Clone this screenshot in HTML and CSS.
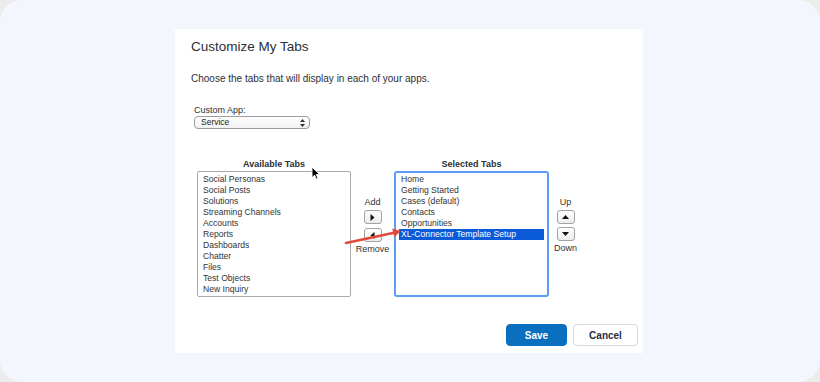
FILE: index.html
```html
<!DOCTYPE html>
<html lang="en">
<head>
<meta charset="utf-8">
<title>Customize My Tabs</title>
<link rel="stylesheet" href="styles.css">
</head>
<body>
<div class="frame">
  <div class="panel">
    <h1 class="title">Customize My Tabs</h1>
    <p class="desc">Choose the tabs that will display in each of your apps.</p>
    <div class="app-field">
      <div class="field-label">Custom App:</div>
      <div class="select">
        <span class="select-value">Service</span>
        <svg class="select-arrows" width="5" height="8" viewBox="0 0 5 8"><path d="M2.5 0 L5 3 L0 3 Z M0 5 L5 5 L2.5 8 Z" fill="#333"/></svg>
      </div>
    </div>
    <div class="tabs">
      <div class="col col-avail">
        <div class="col-head">Available Tabs</div>
        <ul class="list">
          <li>Social Personas</li>
          <li>Social Posts</li>
          <li>Solutions</li>
          <li>Streaming Channels</li>
          <li>Accounts</li>
          <li>Reports</li>
          <li>Dashboards</li>
          <li>Chatter</li>
          <li>Files</li>
          <li>Test Objects</li>
          <li>New Inquiry</li>
        </ul>
      </div>
      <div class="ctrl ctrl-mid">
        <div class="ctrl-label">Add</div>
        <button class="mini"><svg width="5" height="7" viewBox="0 0 5 7"><path d="M0.5 0 L4.5 3.5 L0.5 7 Z" fill="#111"/></svg></button>
        <button class="mini mini-second"><svg width="5" height="7" viewBox="0 0 5 7"><path d="M4.5 0 L0.5 3.5 L4.5 7 Z" fill="#111"/></svg></button>
        <div class="ctrl-label ctrl-label-bottom">Remove</div>
      </div>
      <div class="col col-sel">
        <div class="col-head">Selected Tabs</div>
        <ul class="list list-focus">
          <li>Home</li>
          <li>Getting Started</li>
          <li>Cases (default)</li>
          <li>Contacts</li>
          <li>Opportunities</li>
          <li class="is-selected">XL-Connector Template Setup</li>
        </ul>
      </div>
      <div class="ctrl ctrl-side">
        <div class="ctrl-label">Up</div>
        <button class="mini"><svg width="7" height="4" viewBox="0 0 7 4"><path d="M0 4 L3.5 0 L7 4 Z" fill="#111"/></svg></button>
        <button class="mini mini-side-second"><svg width="7" height="4" viewBox="0 0 7 4"><path d="M0 0 L7 0 L3.5 4 Z" fill="#111"/></svg></button>
        <div class="ctrl-label ctrl-label-bottom">Down</div>
      </div>
    </div>
    <div class="actions">
      <button class="btn btn-save">Save</button>
      <button class="btn btn-cancel">Cancel</button>
    </div>
  </div>
  <svg class="annot-arrow" width="820" height="382" viewBox="0 0 820 382">
    <line x1="346" y1="243" x2="394" y2="232.8" stroke="#e2493d" stroke-width="2.6" stroke-linecap="round"/>
    <path d="M401 231 L394.3 237 L392.2 228.4 Z" fill="#e2493d"/>
  </svg>
  <svg class="cursor" width="10" height="14" viewBox="0 0 10 14">
    <path d="M1 1 L1 11.5 L3.6 9.2 L5.4 13.2 L7 12.5 L5.3 8.6 L8.6 8.6 Z" fill="#000" stroke="#fff" stroke-width="0.9" stroke-linejoin="round"/>
  </svg>
</div>
</body>
</html>
```

FILE: styles.css
```css
* {
  box-sizing: border-box;
}

html, body {
  margin: 0;
  padding: 0;
}

body {
  background: #ececec;
  font-family: "Liberation Sans", Arial, sans-serif;
  color: #333;
}

.frame {
  position: relative;
  width: 820px;
  height: 382px;
  background: #f3f6fd;
  border-radius: 22px;
  padding: 29px 0 0 175px;
}

.panel {
  width: 468px;
  height: 324px;
  background: #ffffff;
  padding: 9px 5px 0 16px;
}

.title {
  margin: 0;
  font-size: 13.5px;
  line-height: 18px;
  font-weight: normal;
  color: #2b2f36;
}

.desc {
  margin: 17px 0 0;
  font-size: 10px;
  line-height: 12px;
  color: #2b2f36;
}

.app-field {
  margin: 20px 0 0 3px;
}

.field-label {
  font-size: 9px;
  line-height: 11px;
  color: #2b2f36;
}

.select {
  width: 116px;
  height: 13px;
  border: 1px solid #9c9c9c;
  border-radius: 4px;
  background: linear-gradient(#ffffff, #f2f2f2);
  display: flex;
  align-items: center;
  justify-content: space-between;
  padding: 0 4px 0 6px;
}

.select-value {
  font-size: 8.5px;
  line-height: 11px;
  color: #222;
}

.select-arrows {
  display: block;
}

.tabs {
  display: flex;
  margin-top: 30px;
  padding-left: 6px;
}

.col {
  display: flex;
  flex-direction: column;
}

.col-avail {
  width: 154px;
}

.col-sel {
  width: 155px;
}

.col-head {
  text-align: center;
  font-size: 9px;
  font-weight: bold;
  line-height: 11px;
  height: 12px;
  color: #2b2f36;
}

.list {
  list-style: none;
  margin: 0;
  height: 126px;
  border: 1px solid #a9a9a9;
  border-radius: 2px;
  padding: 2px 0 0 5px;
  font-size: 8.6px;
  line-height: 11px;
  color: #333;
}

.list li {
  height: 11px;
  white-space: nowrap;
}

.list-focus {
  border: 2px solid #5d9cf2;
  border-radius: 3px;
  padding: 1px 3px 0 3px;
}

.list-focus li {
  padding-left: 2px;
}

.list-focus .is-selected {
  background: #0b5ad8;
  color: #ffffff;
}

.ctrl {
  display: flex;
  flex-direction: column;
  align-items: center;
  padding-top: 38px;
}

.ctrl-mid {
  width: 43px;
}

.ctrl-side {
  width: 33px;
}

.ctrl-label {
  font-size: 9px;
  line-height: 11px;
  color: #333;
}

.ctrl-label-bottom {
  margin-top: 2px;
}

.mini {
  width: 18px;
  height: 14px;
  margin-top: 2px;
  padding: 0;
  border: 1px solid #a3a3a3;
  border-radius: 3px;
  background: linear-gradient(#ffffff, #ececec);
  display: flex;
  align-items: center;
  justify-content: center;
}

.mini svg {
  display: block;
}

.mini-second {
  margin-top: 4px;
}

.mini-side-second {
  margin-top: 3px;
}

.actions {
  display: flex;
  justify-content: flex-end;
  gap: 6px;
  margin-top: 27px;
}

.btn {
  height: 22px;
  border-radius: 4px;
  font-family: "Liberation Sans", Arial, sans-serif;
  font-size: 10px;
  font-weight: bold;
  padding: 0;
}

.btn-save {
  width: 61px;
  background: #0b6fc0;
  border: 1px solid #0b6fc0;
  color: #ffffff;
}

.btn-cancel {
  width: 65px;
  background: #ffffff;
  border: 1px solid #d5dae1;
  color: #1f2d44;
}

.annot-arrow {
  position: absolute;
  left: 0;
  top: 0;
  pointer-events: none;
}

.cursor {
  position: absolute;
  left: 311px;
  top: 166px;
  pointer-events: none;
}
```
